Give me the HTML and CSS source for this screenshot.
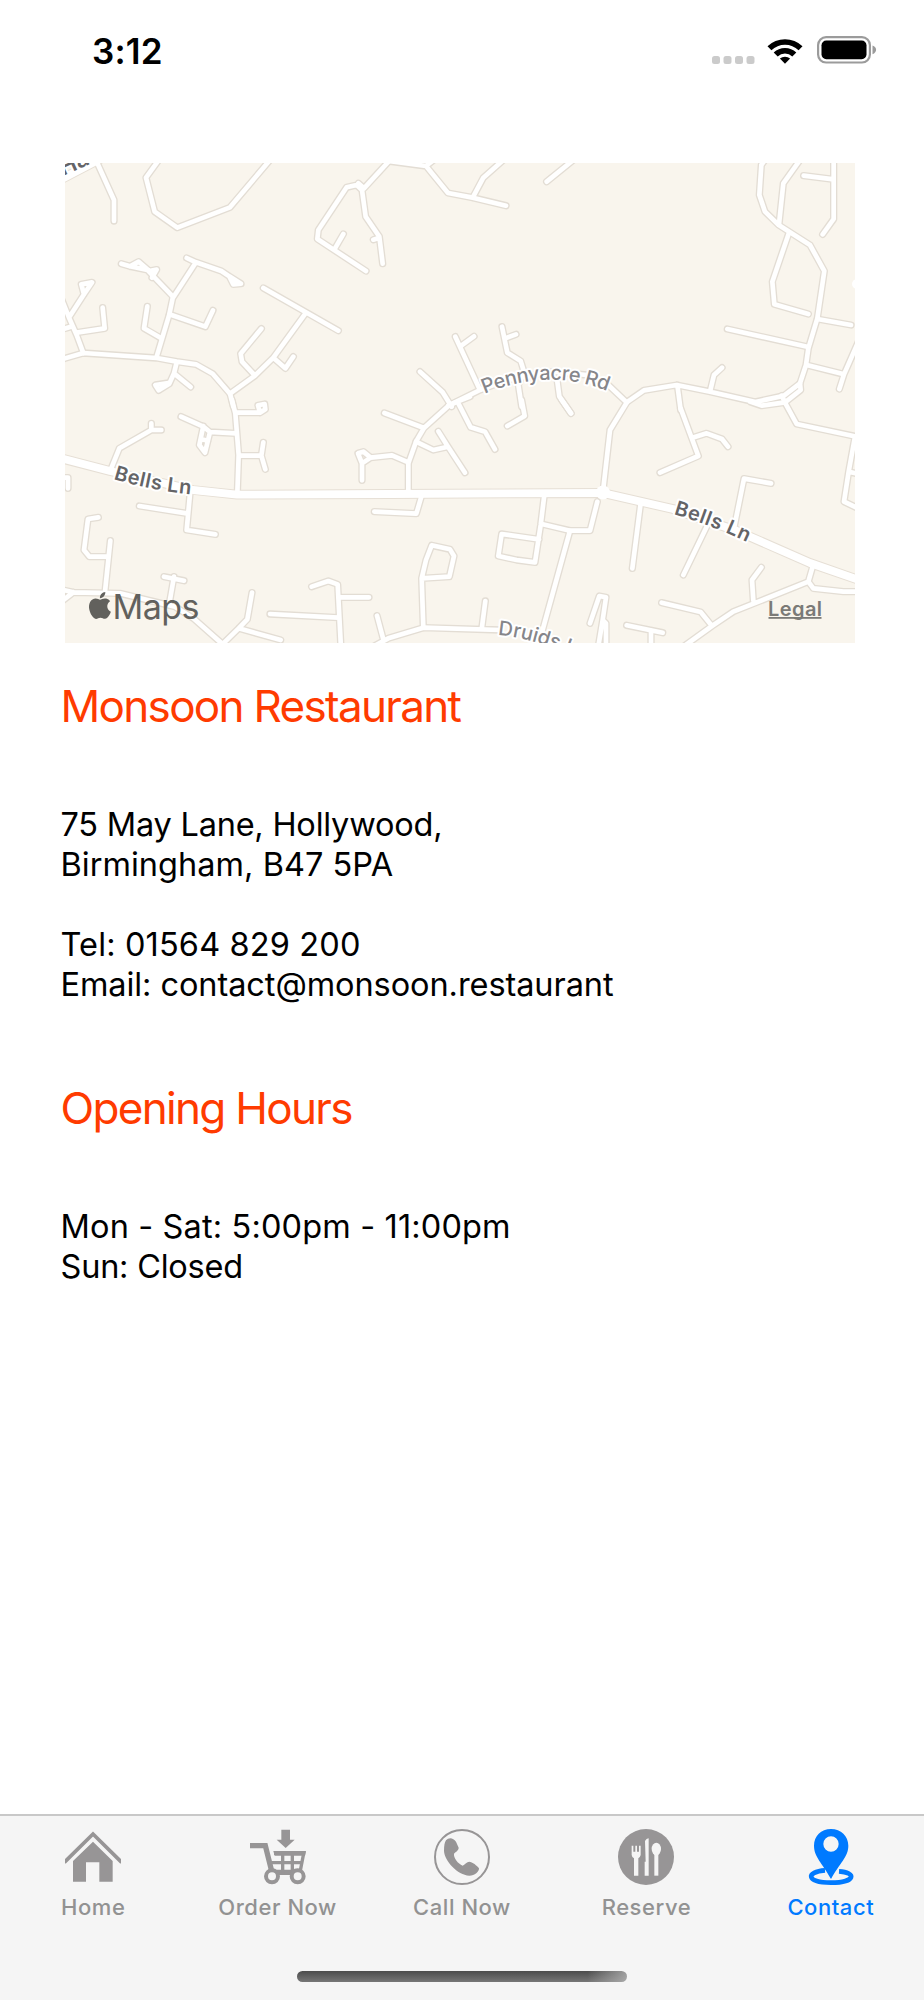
FILE: index.html
```html
<!DOCTYPE html>
<html lang="en">
<head>
<meta charset="utf-8">
<title>Contact – Monsoon Restaurant</title>
<link rel="stylesheet" href="styles.css">
</head>
<body>
<div class="screen">
  <header class="status">
    <span class="time">3:12</span>
    <div class="indicators">
      <svg class="signal" width="43" height="8" viewBox="0 0 43 8"><rect width="8" height="8" rx="2.5"/><rect x="11.5" width="8" height="8" rx="2.5"/><rect x="23" width="8" height="8" rx="2.5"/><rect x="34.5" width="8" height="8" rx="2.5"/></svg>
      <svg class="wifi" width="36" height="27" viewBox="0 0 36 27"><path d="M0.5 9.3A25 25 0 0 1 35.5 9.3L31.6 13.3A19.5 19.5 0 0 0 4.4 13.3Z"/><path d="M6.7 15.6A16.2 16.2 0 0 1 29.3 15.6L25.3 19.5A10.5 10.5 0 0 0 10.7 19.5Z"/><path d="M12.9 21.6A7.6 7.6 0 0 1 23.1 21.6L18 26.8Z"/></svg>
      <svg class="battery" width="60" height="28" viewBox="0 0 60 28"><rect class="shell" x="1.1" y="1.1" width="51.8" height="25.4" rx="8"/><rect x="4.5" y="4.5" width="45" height="18.7" rx="4.8"/><path class="nub" d="M55.5 9.5c4.8 1.5 4.8 7 0 8.8z"/></svg>
    </div>
  </header>

  <main class="content">
    <svg class="map" viewBox="65 163 790 480" width="790" height="480">
      <defs>
        <g id="streets">
          <g transform="translate(60 155) scale(.33333)">
            <path d="M110 20L162 135V198M300 10L258 68L284 170L352 218L510 157L630 15"/>
            <path d="M184 326L210 334L262 345L338 424M210 334L236 320L268 348L290 344L276 368"/>
            <path d="M380 309L408 322L484 348L508 364L520 388L543 386L508 364M408 322L338 430L328 478L290 605"/>
            <path d="M328 478L436 515L459 466M262 454L252 520L304 550"/>
            <path d="M28 486L72 418L96 382L64 388L72 418M0 420L28 490L50 540L70 594M0 525L30 516M128 458L134 520L50 533"/>
            <path d="M-10 620L15 610L70 594L290 609L350 620L408 628L458 656L510 716L520 755"/>
            <path d="M350 622L342 655L328 686L296 706L286 690L325 684M342 655L392 696"/>
            <path d="M510 716L585 662L640 608L736 476M610 399L835 527M585 662L546 620L542 596L604 521M640 608L676 640L700 605"/>
          </g>
          <g transform="translate(320 155) scale(.33333)">
            <path d="M115 85L132 100L210 15M138 348L-8 252L-5 225L80 97L110 90L126 105L137 185L178 245L188 326M178 248L160 254M45 280L70 237"/>
            <path d="M205 18L318 33L384 114L458 128L558 152M318 33L345 12M458 128L490 68L550 15M680 80L760 15"/>
            <path d="M300 650L368 712L395 755M406 545L480 705M424 572L462 544M385 752L480 705L560 675L700 650L800 660L865 690L920 742"/>
            <path d="M546 515L562 593L602 618L612 650L595 690L605 755M588 538L556 550M712 680L718 724L753 775"/>
          </g>
          <g transform="translate(590 155) scale(.33333)">
            <path d="M525 15L514 30L508 120L525 170L566 210L660 270L703 348L682 490L655 580L648 630L630 685L582 722L500 740"/>
            <path d="M630 15L580 85L567 208M731 15V192L698 238M641 62L731 73M596 236L547 380L553 448L655 477"/>
            <path d="M682 492L783 510M412 522L655 576M650 630L762 658M805 560L762 658L748 702"/>
            <path d="M110 742L162 706L260 690L360 710L500 742M360 710L372 660L396 638M262 690L272 765M630 685L632 705L585 742L515 752L480 740M575 722L585 742"/>
          </g>
          <g transform="translate(60 400) scale(.33333)">
            <path d="M150 214L178 145L274 90H304M274 90V70M363 50L430 80L450 96L528 100M430 78L418 135L435 158L450 96M424 118L444 122"/>
            <path d="M516 0L526 40L536 165L532 280M526 38H600L616 28L614 12L594 16L600 38M536 167H604M610 127L604 167L616 208"/>
            <path d="M5 233H24V265M115 352L84 357L72 450L88 470H144M151 422L135 575M238 318L380 340M390 282L380 390L466 403"/>
            <path d="M0 568L40 577L180 580L345 620L400 655L485 730M40 577L0 608M312 530L372 542M342 530L328 610M475 745L536 685L562 658L576 578M536 685L662 720"/>
            <path d="M755 560L805 543L833 553L843 745M630 642L835 653M835 592H927"/>
          </g>
          <g transform="translate(320 400) scale(.33333)">
            <path d="M193 39L312 84M450 -10L405 8L385 18L312 84L288 125L265 190V275M415 10L452 82L495 95L525 148"/>
            <path d="M355 94L384 140L435 218M288 125L340 150L384 140M265 187L216 166L152 173L126 190V241M126 190L114 160L130 155L152 173"/>
            <path d="M304 290L289 341L163 335M605 0L614 48L562 78M725 0L753 40M673 285L662 375L645 487L590 480L535 468L545 402L657 418"/>
            <path d="M665 372L750 392H810L832 305M750 392L665 700M305 535L388 530L402 468L390 448L335 436L318 480L305 535L310 683"/>
            <path d="M150 745L205 715L310 683L540 690M190 718L171 647M485 688L496 603"/>
          </g>
          <g transform="translate(590 400) scale(.33333)">
            <path d="M110 8L60 90L40 265M272 25L325 168L210 218M312 112L350 100L396 117L414 140M152 310L127 505M350 380L280 525M432 385L462 236L543 250"/>
            <path d="M585 8L620 72L800 110M795 110L776 215L762 305L810 328M776 215L805 222"/>
            <path d="M215 608L332 636L366 678M280 740L366 678L430 635L655 545L668 500M655 545L670 565L760 575H810M490 602L486 540L514 502"/>
            <path d="M110 676L218 698M183 692V745M0 670L28 588L48 592L38 660L48 670V745M38 660L24 745"/>
          </g>
        </g>
        <path id="main-road" d="M56 457L110 471L193 490L237 494.6L390 494L603 493L673 509L737 531L810 563L862 581"/>
        <path id="corner-road" d="M54 183L102 158"/>
        <path id="bells-west" d="M113.500 479Q150 490.500 193 494.500"/>
        <path id="pennyacre" d="M484.500 394Q550 366 612 393"/>
        <path id="bells-east" d="M673.500 514Q712 525.500 750 543.500"/>
        <path id="druids" d="M498 635Q534 638 585 660"/>
        <path id="corner" d="M63 176L110 155"/>
      </defs>
      <rect class="land" x="65" y="163" width="790" height="480"/>
      <use href="#streets" class="casing"/>
      <use href="#main-road" class="main-casing"/>
      <use href="#corner-road" class="main-casing"/>
      <use href="#streets" class="surface"/>
      <use href="#main-road" class="main-surface"/>
      <use href="#corner-road" class="main-surface"/>
      <circle cx="603" cy="492.500" r="7" fill="#fff"/>
      <circle cx="857" cy="284" r="5" fill="#fff"/>
      <text class="label major" textLength="79"><textPath href="#bells-west">Bells Ln</textPath></text>
      <text class="label" textLength="126"><textPath href="#pennyacre">Pennyacre Rd</textPath></text>
      <text class="label major" textLength="79"><textPath href="#bells-east">Bells Ln</textPath></text>
      <text class="label"><textPath href="#druids">Druids Ln</textPath></text>
      <text class="label major corner-label"><textPath href="#corner">Har</textPath></text>
      <path class="logo" transform="translate(86.500 592) scale(1.12)" d="M12.152 6.896c-.948 0-2.415-1.078-3.96-1.04-2.04.027-3.91 1.183-4.961 3.014-2.117 3.675-.546 9.103 1.519 12.09 1.013 1.454 2.208 3.09 3.792 3.039 1.52-.065 2.09-.987 3.935-.987 1.831 0 2.35.987 3.96.948 1.637-.026 2.676-1.48 3.676-2.948 1.156-1.688 1.636-3.325 1.662-3.415-.039-.013-3.182-1.221-3.22-4.857-.026-3.04 2.48-4.494 2.597-4.559-1.429-2.09-3.623-2.324-4.39-2.376-2-.156-3.675 1.09-4.61 1.09zM15.53 3.83c.843-1.012 1.4-2.427 1.245-3.83-1.207.052-2.662.805-3.532 1.818-.78.896-1.454 2.338-1.273 3.714 1.338.104 2.715-.688 3.559-1.701"/>
      <text class="brand" x="112.500" y="619" textLength="87">Maps</text>
      <text class="legal" x="768" y="616" textLength="54">Legal</text>
      <rect class="legal-line" x="768.500" y="617" width="53" height="1.800"/>
    </svg>

    <section class="details">
      <h1 class="title">Monsoon Restaurant</h1>
      <p class="text address"><span class="snug">75 May Lane, Hollywood,</span><br><span class="loose">Birmingham, B47 5PA</span></p>
      <p class="text contact"><span class="looser">Tel: 01564 829 200</span><br>Email: contact@monsoon.restaurant</p>
    </section>
    <section class="hours">
      <h2 class="title">Opening Hours</h2>
      <p class="text"><span class="looser">Mon - Sat: 5:00pm - 11:00pm</span><br><span class="snug">Sun: Closed</span></p>
    </section>
  </main>

  <nav class="tabs">
    <a class="tab"><svg class="icon" viewBox="0 0 168 168"><path class="line" d="M-2 100L84 15L170 100" stroke-width="11"/><path d="M24 158V96L84 38L143 96V158H103V100H63V158Z"/></svg><span>Home</span></a>
    <a class="tab"><svg class="icon" viewBox="0 0 168 168"><path d="M94 2H120V32H134L107 57L80 32H94Z"/><path class="line" stroke-width="16" d="M0 50H46L66 130H142"/><path class="line" stroke-width="10" d="M72 73H161L150 130M60 101H155M98 70V130M127 70V130"/><path d="M70 66H168L165 80H74Z"/><circle class="wheel" cx="66" cy="142" r="18"/><circle class="wheel" cx="143" cy="142" r="18"/></svg><span>Order Now</span></a>
    <a class="tab"><svg class="icon" viewBox="0 0 168 168"><circle class="line" cx="84" cy="84" r="81" stroke-width="6"/><path d="M36 34C44 24 58 26 66 38L74 56C74 64 66 68 60 74C58 86 72 104 86 110C94 106 98 98 106 98C114 98 130 110 135 118C136 128 122 140 106 140C70 138 32 96 30 66C30 50 32 40 36 34Z"/></svg><span>Call Now</span></a>
    <a class="tab"><svg class="icon" viewBox="0 0 168 168"><circle cx="84" cy="84" r="84"/><g class="cutlery"><path d="M41 50H46V68H52V50H57V68H63V50H68V78Q66 86 61 88V140H48V88Q42 86 41 78Z"/><path d="M81 36Q85 28 92 28V140H80V98H83Z"/><ellipse cx="115" cy="60" rx="14" ry="19"/><path d="M109 74H121V140H109Z"/></g></svg><span>Reserve</span></a>
    <a class="tab active"><svg class="icon" viewBox="0 0 168 168"><path fill-rule="evenodd" d="M84 0C54 0 33 22 33 50C33 84 58 102 84 150C110 102 136 84 136 50C136 22 114 0 84 0ZM84 22A23 23 0 1 1 84 68A23 23 0 1 1 84 22Z"/><path class="line" stroke-width="14" d="M66 124C8 128 8 161 84 161C160 161 160 130 108 127"/></svg><span>Contact</span></a>
  </nav>
  <div class="home-area"><div class="home-indicator"></div></div>
</div>
</body>
</html>
```

FILE: styles.css
```css
* { box-sizing: border-box; }
body { margin: 0; background: #fff; font-family: Inter, "Liberation Sans", sans-serif; }
.screen { width: 924px; height: 2000px; display: flex; flex-direction: column; overflow: hidden; }

.status { height: 163px; padding: 29px 48px 0 92px; display: flex; justify-content: space-between; align-items: flex-start; }
.time { font-size: 35px; line-height: 44px; font-weight: 600; letter-spacing: 0.2px; }
.indicators { display: flex; align-items: flex-end; margin-top: 7px; height: 28px; }
.signal { fill: #cbcbcb; margin-right: 12px; }
.wifi { margin-right: 14px; }
.battery .shell { fill: none; stroke: #9b9b9b; stroke-width: 2.200; }
.battery .nub { fill: #9b9b9b; }
.battery { margin-right: -1px; }

.content { flex: 1; }
.map { display: block; margin-left: 65px; }
.land { fill: #f9f5ed; }
.casing, .surface, .main-casing, .main-surface { fill: none; stroke-linecap: round; stroke-linejoin: round; }
.casing { stroke: #e3ddd4; stroke-width: 22; }
.surface { stroke: #fff; stroke-width: 14; }
.main-casing { stroke: #e6dfd5; stroke-width: 9.800; }
.main-surface { stroke: #fff; stroke-width: 7.800; }
.label { font-size: 20px; font-weight: 500; fill: #86868a; stroke: #fff; stroke-width: 4px; stroke-linejoin: round; paint-order: stroke; }
.major { font-weight: 600; fill: #646467; }
.corner-label { font-size: 23px; }
.logo, .brand { fill: #62615d; }
.brand { font-size: 34px; font-weight: 400; }
.legal { font-size: 20px; font-weight: 600; fill: #7b7a77; }
.legal-line { fill: #7b7a77; }

.details, .hours { padding-left: 60.500px; }
.details { padding-top: 37px; }
.hours { padding-top: 77px; }
.title { margin: 0 0 73px; font-size: 44px; line-height: 52px; font-weight: 400; color: #ff3b00; letter-spacing: -1.680px; }
.text { margin: 0; font-size: 32.500px; line-height: 40px; color: #000; letter-spacing: -0.080px; }
.snug { letter-spacing: -0.220px; }
.loose { letter-spacing: 0.030px; }
.looser { letter-spacing: 0.140px; }
.contact { margin-top: 40px; }

.tabs { height: 125px; border-top: 2px solid #c8c8c8; background: #f5f5f5; display: grid; grid-template-columns: repeat(5, 1fr); padding: 13px 1px 0; }
.tab { display: flex; flex-direction: column; align-items: center; color: #929292; }
.tab span { margin-top: 7px; font-size: 22px; line-height: 30px; font-weight: 450; letter-spacing: 0.550px; }
.icon { width: 56px; height: 56px; fill: #979596; }
.line { fill: none; stroke: #979596; }
.wheel { fill: #f5f5f5; stroke: #979596; stroke-width: 12; }
.cutlery { fill: #f5f5f5; }
.active { color: #007aff; }
.active .icon { fill: #007aff; }
.active .line { fill: none; stroke: #007aff; }
.home-area { height: 61px; background: #f5f5f5; padding-top: 32px; }
.home-indicator { width: 330px; height: 11px; margin: 0 auto; border-radius: 6px; background: linear-gradient(90deg, transparent 88%, rgba(190,190,190,.7)), linear-gradient(#4c4c4c, #777); }
```
